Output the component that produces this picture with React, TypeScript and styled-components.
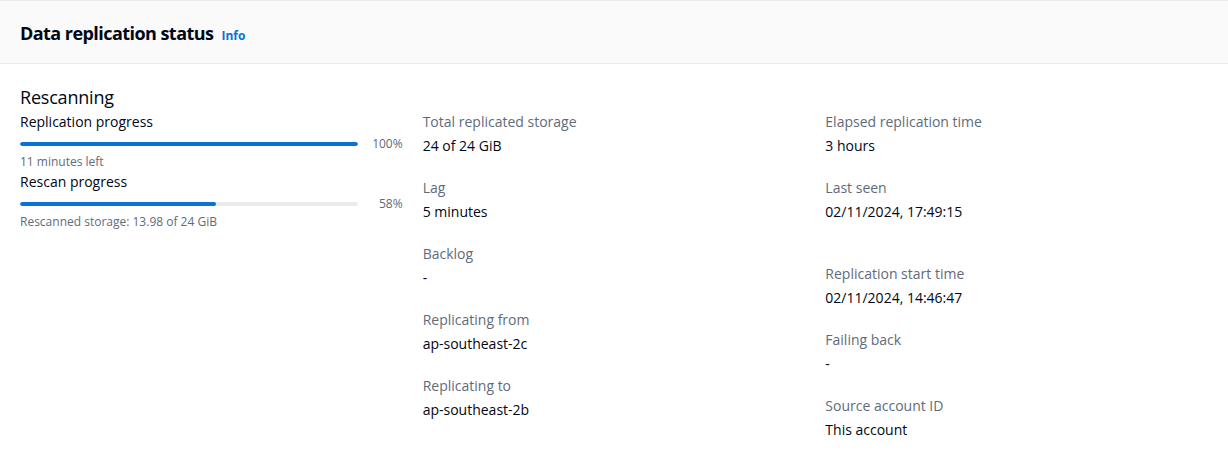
import React from 'react';
import styled, { createGlobalStyle } from 'styled-components';

const GlobalStyle = createGlobalStyle`
  html, body {
    margin: 0;
    padding: 0;
    background: #ffffff;
  }
  body {
    font-family: 'Open Sans', 'Noto Sans', Arial, sans-serif;
    color: #000716;
    -webkit-font-smoothing: antialiased;
  }
`;

const Panel = styled.section`
  width: 1228px;
  height: 460px;
  box-sizing: border-box;
  border-top: 1px solid #e9ebed;
  background: #ffffff;
`;

const Header = styled.header`
  display: flex;
  align-items: baseline;
  gap: 8px;
  height: 63px;
  box-sizing: border-box;
  padding: 21px 20px 0;
  background: #fafafa;
  border-bottom: 1px solid #e9ebed;
`;

const Title = styled.h2`
  margin: 0;
  font-size: 18px;
  line-height: 22px;
  font-weight: 700;
  letter-spacing: -0.55px;
  color: #000716;
`;

const InfoLink = styled.a`
  font-size: 12px;
  line-height: 16px;
  font-weight: 700;
  color: #0972d3;
  text-decoration: none;
  cursor: pointer;
`;

const Body = styled.div`
  display: grid;
  grid-template-columns: repeat(3, 1fr);
  column-gap: 20px;
  padding: 22px 20px 20px;
`;

const Column = styled.div<{ $offset?: boolean }>`
  display: flex;
  flex-direction: column;
  padding-top: ${(p) => (p.$offset ? '26px' : '0')};
  gap: 22px;
`;

const StatusColumn = styled.div`
  display: flex;
  flex-direction: column;
`;

const StatusTitle = styled.h3`
  margin: 0 0 4px;
  font-size: 18px;
  line-height: 22px;
  font-weight: 400;
  letter-spacing: -0.2px;
  color: #000716;
`;

const ProgressLabel = styled.div<{ $gap?: boolean }>`
  font-size: 14px;
  line-height: 20px;
  color: #000716;
  margin-top: ${(p) => (p.$gap ? '2px' : '0')};
`;

const ProgressRow = styled.div`
  display: flex;
  align-items: center;
  height: 20px;
  margin-top: 2px;
  gap: 12px;
`;

const Track = styled.div`
  flex: 1;
  height: 4px;
  border-radius: 10px;
  background: #e9ebed;
  overflow: hidden;
`;

const Fill = styled.div`
  height: 100%;
  border-radius: 10px;
  background: #0972d3;
`;

const Percent = styled.span`
  min-width: 33px;
  text-align: right;
  font-size: 12px;
  line-height: 16px;
  color: #5f6b7a;
`;

const Hint = styled.div`
  font-size: 12px;
  line-height: 16px;
  color: #5f6b7a;
`;

const Pair = styled.div`
  display: flex;
  flex-direction: column;
  gap: 4px;
`;

const Label = styled.div`
  font-size: 14px;
  line-height: 20px;
  color: #5f6b7a;
`;

const Value = styled.div<{ $extra?: boolean }>`
  font-size: 14px;
  line-height: 20px;
  color: #000716;
  min-height: ${(p) => (p.$extra ? '40px' : '20px')};
`;

const Progress = ({ value }: { value: number }) => (
  <ProgressRow>
    <Track>
      <Fill style={{ width: `${value}%` }} />
    </Track>
    <Percent>{value}%</Percent>
  </ProgressRow>
);

const middle = [
  ['Total replicated storage', '24 of 24 GiB'],
  ['Lag', '5 minutes'],
  ['Backlog', '-'],
  ['Replicating from', 'ap-southeast-2c'],
  ['Replicating to', 'ap-southeast-2b'],
];

const right = [
  ['Elapsed replication time', '3 hours'],
  ['Last seen', '02/11/2024, 17:49:15'],
  ['Replication start time', '02/11/2024, 14:46:47'],
  ['Failing back', '-'],
  ['Source account ID', 'This account'],
];

export default function App() {
  return (
    <>
      <GlobalStyle />
      <Panel>
        <Header>
          <Title>Data replication status</Title>
          <InfoLink>Info</InfoLink>
        </Header>
        <Body>
          <StatusColumn>
            <StatusTitle>Rescanning</StatusTitle>
            <ProgressLabel>Replication progress</ProgressLabel>
            <Progress value={100} />
            <Hint>11 minutes left</Hint>
            <ProgressLabel $gap>Rescan progress</ProgressLabel>
            <Progress value={58} />
            <Hint>Rescanned storage: 13.98 of 24 GiB</Hint>
          </StatusColumn>
          <Column $offset>
            {middle.map(([l, v]) => (
              <Pair key={l}>
                <Label>{l}</Label>
                <Value>{v}</Value>
              </Pair>
            ))}
          </Column>
          <Column $offset>
            {right.map(([l, v]) => (
              <Pair key={l}>
                <Label>{l}</Label>
                <Value $extra={l === 'Last seen'}>{v}</Value>
              </Pair>
            ))}
          </Column>
        </Body>
      </Panel>
    </>
  );
}
